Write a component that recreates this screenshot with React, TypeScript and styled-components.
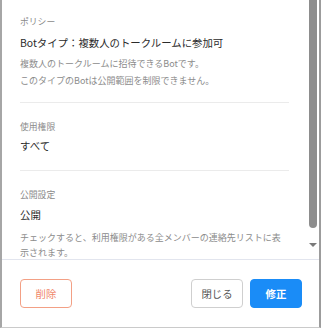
import styled, { createGlobalStyle } from "styled-components";

const Global = createGlobalStyle`
  html, body {
    margin: 0;
    padding: 0;
    background: #ffffff;
  }
  body {
    font-family: "Noto Sans CJK JP", "Noto Sans", sans-serif;
  }
`;

type SectionData = {
  label: string;
  value: string;
  desc?: string[];
  top: number;
  bottom: number;
  valueGap: number;
  descGap?: number;
  lh?: number;
  divider: boolean;
};

const sections: SectionData[] = [
  {
    label: "ポリシー",
    value: "Botタイプ：複数人のトークルームに参加可",
    desc: ["複数人のトークルームに招待できるBotです。", "このタイプのBotは公開範囲を制限できません。"],
    top: 15,
    bottom: 13,
    valueGap: 5,
    descGap: 3,
    lh: 17,
    divider: true,
  },
  {
    label: "使用権限",
    value: "すべて",
    top: 17,
    bottom: 15,
    valueGap: 3,
    divider: true,
  },
  {
    label: "公開設定",
    value: "公開",
    desc: ["チェックすると、利用権限がある全メンバーの連絡先リストに表示されます。"],
    top: 17,
    bottom: 0,
    valueGap: 4,
    descGap: 6,
    lh: 15,
    divider: false,
  },
];

export default function App() {
  return (
    <>
      <Global />
      <Frame>
        <ScrollArea>
          <Content>
            {sections.map((s) => (
              <Section key={s.label} $top={s.top} $bottom={s.bottom} $divider={s.divider}>
                <Label>{s.label}</Label>
                <Value $gap={s.valueGap}>{s.value}</Value>
                {s.desc && (
                  <Desc $gap={s.descGap ?? 3} $lh={s.lh ?? 16}>
                    {s.desc.map((line, i) => (
                      <span key={i}>
                        {line}
                        {i < s.desc!.length - 1 && <br />}
                      </span>
                    ))}
                  </Desc>
                )}
              </Section>
            ))}
          </Content>
          <ScrollTrack>
            <Thumb />
            <ArrowDown />
          </ScrollTrack>
        </ScrollArea>
        <Footer>
          <Button $variant="danger">削除</Button>
          <Spacer />
          <Button $variant="plain">閉じる</Button>
          <Button $variant="primary">修正</Button>
        </Footer>
      </Frame>
    </>
  );
}

const Frame = styled.div`
  width: 321px;
  height: 328px;
  box-sizing: border-box;
  border-left: 2px solid #a6a6a6;
  border-right: 2px solid #9c9c9c;
  border-bottom: 1px solid #cacaca;
  display: flex;
  flex-direction: column;
  background: #fff;
`;

const ScrollArea = styled.div`
  height: 259px;
  display: flex;
  overflow: hidden;
`;

const Content = styled.div`
  flex: 1;
  padding: 0 16px 0 18px;
  min-width: 0;
`;

const Section = styled.div<{ $top: number; $bottom: number; $divider: boolean }>`
  padding-top: ${({ $top }) => $top}px;
  padding-bottom: ${({ $bottom }) => $bottom}px;
  border-bottom: ${({ $divider }) => ($divider ? "1px solid #ebebeb" : "none")};
`;

const Label = styled.div`
  font-size: 8.8px;
  line-height: 14px;
  color: #8a8a8a;
`;

const Value = styled.div<{ $gap: number }>`
  margin-top: ${({ $gap }) => $gap}px;
  font-size: 10.4px;
  line-height: 18px;
  color: #2b2b2b;
`;

const Desc = styled.div<{ $gap: number; $lh: number }>`
  margin-top: ${({ $gap }) => $gap}px;
  font-size: 9px;
  line-height: ${({ $lh }) => $lh}px;
  color: #8c8c8c;
`;

const ScrollTrack = styled.div`
  width: 14px;
  display: flex;
  flex-direction: column;
  align-items: flex-start;
  padding-left: 4px;
  box-sizing: border-box;
`;

const Thumb = styled.div`
  width: 8px;
  height: 228px;
  background: #8d8d8d;
  border-radius: 0 0 4px 4px;
`;

const ArrowDown = styled.div`
  margin-top: 15px;
  width: 0;
  height: 0;
  border-left: 4px solid transparent;
  border-right: 4px solid transparent;
  border-top: 4px solid #7a7a7a;
`;

const Footer = styled.div`
  border-top: 1px solid #e2e5ee;
  padding: 19px 17px 19px 18px;
  display: flex;
  align-items: center;
  gap: 7px;
`;

const Spacer = styled.div`
  flex: 1;
`;

const Button = styled.button<{ $variant: "danger" | "plain" | "primary" }>`
  width: 52px;
  height: 29px;
  box-sizing: border-box;
  border-radius: 4px;
  font-family: "Noto Sans CJK JP", "Noto Sans", sans-serif;
  font-size: 10.4px;
  padding: 0;
  cursor: pointer;
  border: 1px solid
    ${({ $variant }) =>
      $variant === "danger" ? "#f3a085" : $variant === "plain" ? "#cfcfcf" : "#1a8cf7"};
  background: ${({ $variant }) => ($variant === "primary" ? "#1a8cf7" : "#ffffff")};
  color: ${({ $variant }) =>
    $variant === "danger" ? "#f0876a" : $variant === "plain" ? "#555555" : "#ffffff"};
  font-weight: ${({ $variant }) => ($variant === "primary" ? 700 : 400)};
`;
